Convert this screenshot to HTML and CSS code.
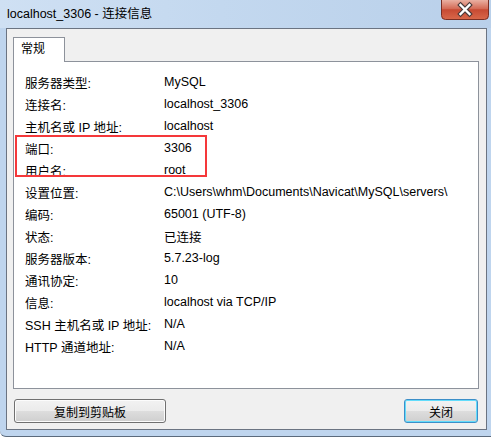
FILE: index.html
```html
<!DOCTYPE html>
<html lang="zh-CN">
<head>
    <meta charset="UTF-8">
    <meta name="viewport" content="width=device-width, initial-scale=1.0">
    <title>连接信息</title>
    <link rel="stylesheet" href="styles.css">
</head>
<body>
    <div class="window">
        <div class="titlebar">
            <span class="title">localhost_3306 - 连接信息</span>
            <button class="close-x" aria-label="关闭">
                <svg width="48" height="20" viewBox="0 0 48 20">
                    <defs>
                        <linearGradient id="redGrad" x1="0" y1="0" x2="0" y2="1">
                            <stop offset="0" stop-color="#eab0a2"/>
                            <stop offset="0.45" stop-color="#d46a55"/>
                            <stop offset="0.5" stop-color="#c74a33"/>
                            <stop offset="1" stop-color="#d9684a"/>
                        </linearGradient>
                    </defs>
                    <path d="M0.5 0 V15.5 Q0.5 19.5 4.5 19.5 H43.5 Q47.5 19.5 47.5 15.5 V0" fill="url(#redGrad)" stroke="#7a2f24"/>
                    <path d="M19.5 5 L28.5 14 M28.5 5 L19.5 14" stroke="#4a3a3a" stroke-width="4.6" stroke-linecap="square"/>
                    <path d="M19.5 5 L28.5 14 M28.5 5 L19.5 14" stroke="#ffffff" stroke-width="2.4" stroke-linecap="square"/>
                </svg>
            </button>
        </div>
        <div class="client">
            <div class="tabs">
                <div class="tab active">常规</div>
            </div>
            <div class="tab-panel">
                <div class="row"><span class="label">服务器类型:</span><span class="value">MySQL</span></div>
                <div class="row"><span class="label">连接名:</span><span class="value">localhost_3306</span></div>
                <div class="row"><span class="label">主机名或 IP 地址:</span><span class="value">localhost</span></div>
                <div class="row"><span class="label">端口:</span><span class="value">3306</span></div>
                <div class="row"><span class="label">用户名:</span><span class="value">root</span></div>
                <div class="row"><span class="label">设置位置:</span><span class="value">C:\Users\whm\Documents\Navicat\MySQL\servers\</span></div>
                <div class="row"><span class="label">编码:</span><span class="value">65001 (UTF-8)</span></div>
                <div class="row"><span class="label">状态:</span><span class="value">已连接</span></div>
                <div class="row"><span class="label">服务器版本:</span><span class="value">5.7.23-log</span></div>
                <div class="row"><span class="label">通讯协定:</span><span class="value">10</span></div>
                <div class="row"><span class="label">信息:</span><span class="value">localhost via TCP/IP</span></div>
                <div class="row"><span class="label">SSH 主机名或 IP 地址:</span><span class="value">N/A</span></div>
                <div class="row"><span class="label">HTTP 通道地址:</span><span class="value">N/A</span></div>
                <div class="highlight"></div>
            </div>
            <div class="buttons">
                <button class="btn btn-copy">复制到剪贴板</button>
                <button class="btn btn-default">关闭</button>
            </div>
        </div>
    </div>
</body>
</html>
```

FILE: styles.css
```css
/* General Styles */
body {
    margin: 0;
    background: #ffffff;
    font-family: 'Liberation Sans', 'Noto Sans CJK SC', sans-serif;
    font-size: 12.5px;
    color: #000;
}

.window {
    width: 491px;
    padding-bottom: 6px;
    background: #bfd5ee;
    border-bottom: 1px solid #5b6a7c;
    border-radius: 0 0 0 6px;
}

/* Title bar */
.titlebar {
    height: 28px;
    display: flex;
    justify-content: space-between;
    align-items: flex-start;
    background: linear-gradient(90deg, #cfe0f3 0%, #c3d8ef 45%, #b9d0ea 100%);
}

.title {
    padding: 6px 0 0 7px;
    font-size: 12.5px;
    line-height: 16px;
    color: #000;
}

.close-x {
    width: 48px;
    height: 20px;
    margin-right: 2px;
    padding: 0;
    border: none;
    background: none;
    display: block;
}

.close-x svg {
    display: block;
}

/* Client area */
.client {
    margin: 0 4px 0 6px;
    padding: 8px 7px 6px 6px;
    background: #f0f0f0;
    border: 1px solid #6b7482;
}

.tabs {
    display: flex;
    height: 24px;
}

.tab {
    width: 43px;
    height: 24px;
    padding-left: 7px;
    line-height: 23px;
    font-size: 12px;
    background: #fff;
    border: 1px solid #8d929b;
    border-bottom: none;
    position: relative;
    z-index: 1;
}

.tab-panel {
    position: relative;
    height: 317px;
    padding-top: 9px;
    background: #fff;
    border: 1px solid #8d929b;
}

.row {
    display: flex;
    align-items: center;
    height: 22px;
}

.label {
    width: 139px;
    padding-left: 11px;
    flex-shrink: 0;
    white-space: nowrap;
}

.value {
    width: 294px;
    white-space: nowrap;
}

.highlight {
    position: absolute;
    left: 1px;
    top: 73px;
    width: 192px;
    height: 42px;
    box-sizing: border-box;
    border: 2px solid #f5383a;
}

/* Buttons */
.buttons {
    display: flex;
    justify-content: space-between;
    margin-top: 10px;
    padding: 0 1px;
}

.btn {
    height: 24px;
    padding: 0;
    font-family: 'Liberation Sans', 'Noto Sans CJK SC', sans-serif;
    font-size: 12px;
    color: #000;
    border: 1px solid #707070;
    border-radius: 3px;
    background: linear-gradient(#f2f2f2 0%, #ebebeb 50%, #dddddd 51%, #cfcfcf 100%);
    box-shadow: inset 0 0 0 1px #fcfcfc;
}

.btn-copy {
    width: 152px;
}

.btn-default {
    width: 74px;
    border-color: #3c8fc8;
    box-shadow: inset 0 0 0 1px #62dcfb;
}
```
